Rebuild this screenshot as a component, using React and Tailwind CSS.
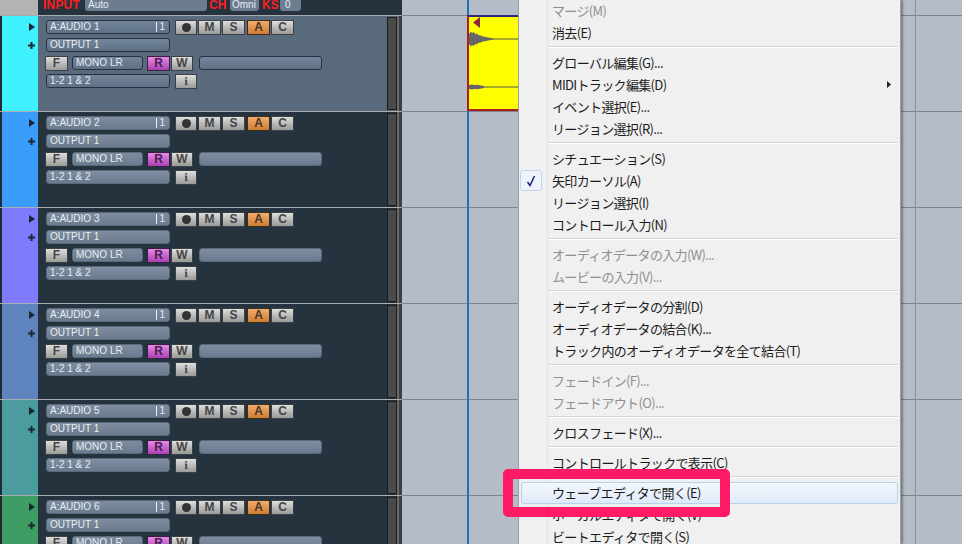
const font = '[font-family:"Liberation_Sans",Arial,sans-serif]';

const tracks = [
  { name: 'A:AUDIO 1', color: 'bg-[#3ff0ff]', selected: true },
  { name: 'A:AUDIO 2', color: 'bg-[#3b9dfb]' },
  { name: 'A:AUDIO 3', color: 'bg-[#7f7bff]' },
  { name: 'A:AUDIO 4', color: 'bg-[#5f84bd]' },
  { name: 'A:AUDIO 5', color: 'bg-[#4a9c9e]' },
  { name: 'A:AUDIO 6', color: 'bg-[#3f9c62]' },
];

const menu = [
  { label: 'マージ(M)', off: true },
  { label: '消去(E)' },
  'sep',
  { label: 'グローバル編集(G)...' },
  { label: 'MIDIトラック編集(D)', arrow: true },
  { label: 'イベント選択(E)...' },
  { label: 'リージョン選択(R)...' },
  'sep',
  { label: 'シチュエーション(S)' },
  { label: '矢印カーソル(A)', checked: true },
  { label: 'リージョン選択(I)' },
  { label: 'コントロール入力(N)' },
  'sep',
  { label: 'オーディオデータの入力(W)...', off: true },
  { label: 'ムービーの入力(V)...', off: true },
  'sep',
  { label: 'オーディオデータの分割(D)' },
  { label: 'オーディオデータの結合(K)...' },
  { label: 'トラック内のオーディオデータを全て結合(T)' },
  'sep',
  { label: 'フェードイン(F)...', off: true },
  { label: 'フェードアウト(O)...', off: true },
  'sep',
  { label: 'クロスフェード(X)...' },
  'sep',
  { label: 'コントロールトラックで表示(C)' },
  'sep',
  { label: 'ウェーブエディタで開く(E)', hover: true },
  { label: 'ボーカルエディタで開く(V)' },
  { label: 'ビートエディタで開く(S)' },
];

function Field({ className = '', children, selected }) {
  return (
    <div
      className={`h-[14px] rounded-[3px] flex items-center px-[3px] text-[10px] text-[#e8edf2] leading-none border ${
        selected
          ? 'bg-gradient-to-b from-[#74869b] to-[#5f7186] border-[#27323e]'
          : 'bg-gradient-to-b from-[#7e8da0] to-[#6b7b8e] border-[#5a6a7c]'
      } ${className}`}
    >
      {children}
    </div>
  );
}

function Btn({ className = '', children, tone = 'gray' }) {
  const tones = {
    gray: 'from-[#dededc] to-[#9a9a98] text-[#444444] border-[#3a4048]',
    orange: 'from-[#f2ac6c] to-[#cf7c32] text-[#4a3420] border-[#3a2c20]',
    purple: 'from-[#e68ae6] to-[#a840b2] text-[#4a2050] border-[#3a2040]',
  };
  return (
    <div
      className={`h-[15px] flex items-center justify-center bg-gradient-to-b ${tones[tone]} border text-[12px] font-bold leading-none ${className}`}
    >
      {children}
    </div>
  );
}

function Row({ className = '', children }) {
  return <div className={`h-[18px] flex items-center ${className}`}>{children}</div>;
}

function Track({ track }) {
  const { name, color, selected } = track;
  return (
    <div className={`h-[96px] shrink-0 flex border-t border-[#a9adb0] ${selected ? 'bg-[#5a6a7d]' : 'bg-[#25333f]'}`}>
      <div className="w-[2px] bg-[#1f2a34]" />
      <div className={`w-[36px] shrink-0 ${color} flex flex-col items-end pr-[3px] pt-[2px]`}>
        <Row>
          <svg width="6" height="8" viewBox="0 0 6 8"><path d="M0 0L6 4L0 8Z" fill="#1b2732" /></svg>
        </Row>
        <Row>
          <svg width="7" height="7" viewBox="0 0 7 7"><path d="M2.5 0h2v2.5H7v2H4.5V7h-2V4.5H0v-2h2.5z" fill="#1b2732" /></svg>
        </Row>
      </div>
      <div className="flex-1 pl-[8px] pt-[2px] flex flex-col">
        <Row>
          <Field selected={selected} className="w-[124px] justify-between">
            <span>{name}</span>
            <span className="border-l border-[#e8edf2] pl-[2px] pr-[1px]">1</span>
          </Field>
          <Btn className="w-[22px] ml-[5px]">
            <span className="w-[9px] h-[9px] rounded-full bg-[#333]" />
          </Btn>
          <Btn className="w-[23px] ml-[1px]">M</Btn>
          <Btn className="w-[23px] ml-[1px]">S</Btn>
          <Btn tone="orange" className="w-[23px] ml-[2px]">A</Btn>
          <Btn className="w-[23px] ml-[1px]">C</Btn>
        </Row>
        <Row>
          <Field selected={selected} className="w-[124px]">OUTPUT 1</Field>
        </Row>
        <Row className="-ml-[1px]">
          <Btn className="w-[23px]">F</Btn>
          <Field selected={selected} className="w-[71px] ml-[4px]">MONO LR</Field>
          <Btn tone="purple" className="w-[23px] ml-[4px]">R</Btn>
          <Btn className="w-[22px] ml-[1px]">W</Btn>
          <Field selected={selected} className="w-[123px] ml-[6px]" />
        </Row>
        <Row>
          <Field selected={selected} className="w-[124px]">1-2 1 &amp; 2</Field>
          <Btn className="w-[22px] ml-[5px] font-serif">i</Btn>
        </Row>
      </div>
      <div className="w-[10px] my-[1px] bg-[#4a4a4a] border border-[#1c1c1c]" />
      <div className="w-[2px] bg-[#6a6a6a]" />
      <div className="w-[3px] bg-[#3a3f42]" />
    </div>
  );
}

function MenuRow({ item }) {
  if (item === 'sep') {
    return (
      <div className="h-[8px] flex items-center pl-[28px] pr-[1px]">
        <div className="flex-1 h-[2px] border-t border-[#d7d7d7] bg-white" />
      </div>
    );
  }
  return (
    <div
      className={`relative h-[22px] flex items-center pl-[32px] text-[13px] leading-none tracking-[-0.65px] ${
        item.off ? 'text-[#8f8f8f]' : 'text-[#1b1b1b]'
      }`}
    >
      {item.hover && (
        <div className="absolute left-[1px] right-[1px] top-[1px] bottom-[-1px] rounded-[3px] border border-[#b8d2ee] bg-gradient-to-b from-[#f4f8fd] to-[#dfeaf8]" />
      )}
      {item.checked && (
        <div className="absolute left-0 top-[1px] w-[22px] h-[21px] rounded-[3px] border border-[#c4d4ec] bg-[#eef3fb] flex items-center justify-center">
          <svg width="10" height="12" viewBox="0 0 10 12"><path d="M1.5 7L4 10.5L8.5 1" fill="none" stroke="#26267a" strokeWidth="1.6" /></svg>
        </div>
      )}
      <span className="relative">{item.label}</span>
      {item.arrow && (
        <svg className="absolute right-[8px] top-[8px]" width="4" height="7" viewBox="0 0 4 7"><path d="M0 0L4 3.5L0 7Z" fill="#222" /></svg>
      )}
    </div>
  );
}

function HeadField({ className = '', children }) {
  return (
    <div className={`h-[14px] -mt-[3px] rounded-[3px] bg-[#6d7d90] text-[#e8edf2] text-[10px] leading-none flex items-center ${className}`}>
      <span className="mt-[1px]">{children}</span>
    </div>
  );
}

function HeadLabel({ className = '', children }) {
  return <span className={`text-[12px] font-bold text-[#ff1f1f] tracking-[0.2px] leading-[12px] -mt-[1px] ${className}`}>{children}</span>;
}

export default function App() {
  return (
    <div className={`w-[962px] h-[544px] overflow-hidden flex relative bg-[#b4bcc8] ${font}`}>
      {/* track list */}
      <div className="w-[402px] shrink-0 flex flex-col">
        <div className="h-[15px] shrink-0 flex bg-[#25333f] overflow-hidden">
          <div className="w-[38px] bg-[#b3b3b3]" />
          <div className="flex items-start pl-[5px]">
            <HeadLabel className="w-[42px]">INPUT</HeadLabel>
            <HeadField className="w-[122px] px-[3px]">Auto</HeadField>
            <HeadLabel className="w-[21px] ml-[2px]">CH</HeadLabel>
            <HeadField className="w-[29px] px-[2px]">Omni</HeadField>
            <HeadLabel className="w-[18px] ml-[3px]">KS</HeadLabel>
            <HeadField className="w-[21px] px-[5px]">0</HeadField>
          </div>
        </div>
        {tracks.map((t) => <Track key={t.name} track={t} />)}
      </div>

      {/* arrange grid */}
      <div className="flex-1 flex flex-col">
        <div className="h-[15px] shrink-0" />
        {tracks.map((t) => <div key={t.name} className="h-[96px] shrink-0 border-t border-[#7f838a]" />)}
      </div>

      <div className="absolute left-[915px] top-0 bottom-0 w-[1px] bg-[#8a8f98]" />
      <div className="absolute left-[467px] top-0 bottom-0 w-[2px] bg-[#1d74b4]" />

      {/* audio clip */}
      <div className="absolute left-[467px] top-[15px] w-[60px] h-[96px] bg-[#ffff00] border-l-2 border-b-2 border-[#a82020] border-t-2 border-t-[#2d2a7a]">
        <svg className="absolute left-0 top-0" width="60" height="92" viewBox="0 0 60 92">
          <path d="M4 5.5L11 0V11Z" fill="#8a2a3a" />
          <path d="M0 22H50" stroke="#555" strokeWidth="1" />
          <path d="M0 70H50" stroke="#555" strokeWidth="1" />
          <path d="M0 17L2 14.5L3 16L5 15L6 17L8 16.5L9 18L12 18.5L14 19.5L17 20L24 21.5V22.5L17 24L14 24.5L12 25.5L9 26L8 27.5L6 27L5 29L3 28L2 29.5L0 27Z" fill="#666" />
          <path d="M0 68L3 67.5L5 68L8 67.8L15 69V71L8 72.2L5 72L3 72.5L0 72Z" fill="#666" />
        </svg>
      </div>

      {/* context menu */}
      <div className='absolute left-[518px] top-0 w-[383px] h-[544px] bg-[#f0f0f0] border-x border-[#a0a0a0] shadow-[2px_0_2px_rgba(60,60,60,0.5)] [font-family:"Noto_Sans_CJK_JP","Liberation_Sans",sans-serif]'>
        <div className="absolute left-[28px] top-0 bottom-0 w-[1px] bg-[#e2e3e3]" />
        <div className="relative px-[1px] -mt-[1px]">
          {menu.map((item, i) => <MenuRow key={i} item={item} />)}
        </div>
      </div>

      {/* annotation */}
      <div className="absolute left-[503px] top-[469px] w-[227px] h-[48px] border-[10px] border-[#ff1a66] rounded-[5px]" />
    </div>
  );
}
